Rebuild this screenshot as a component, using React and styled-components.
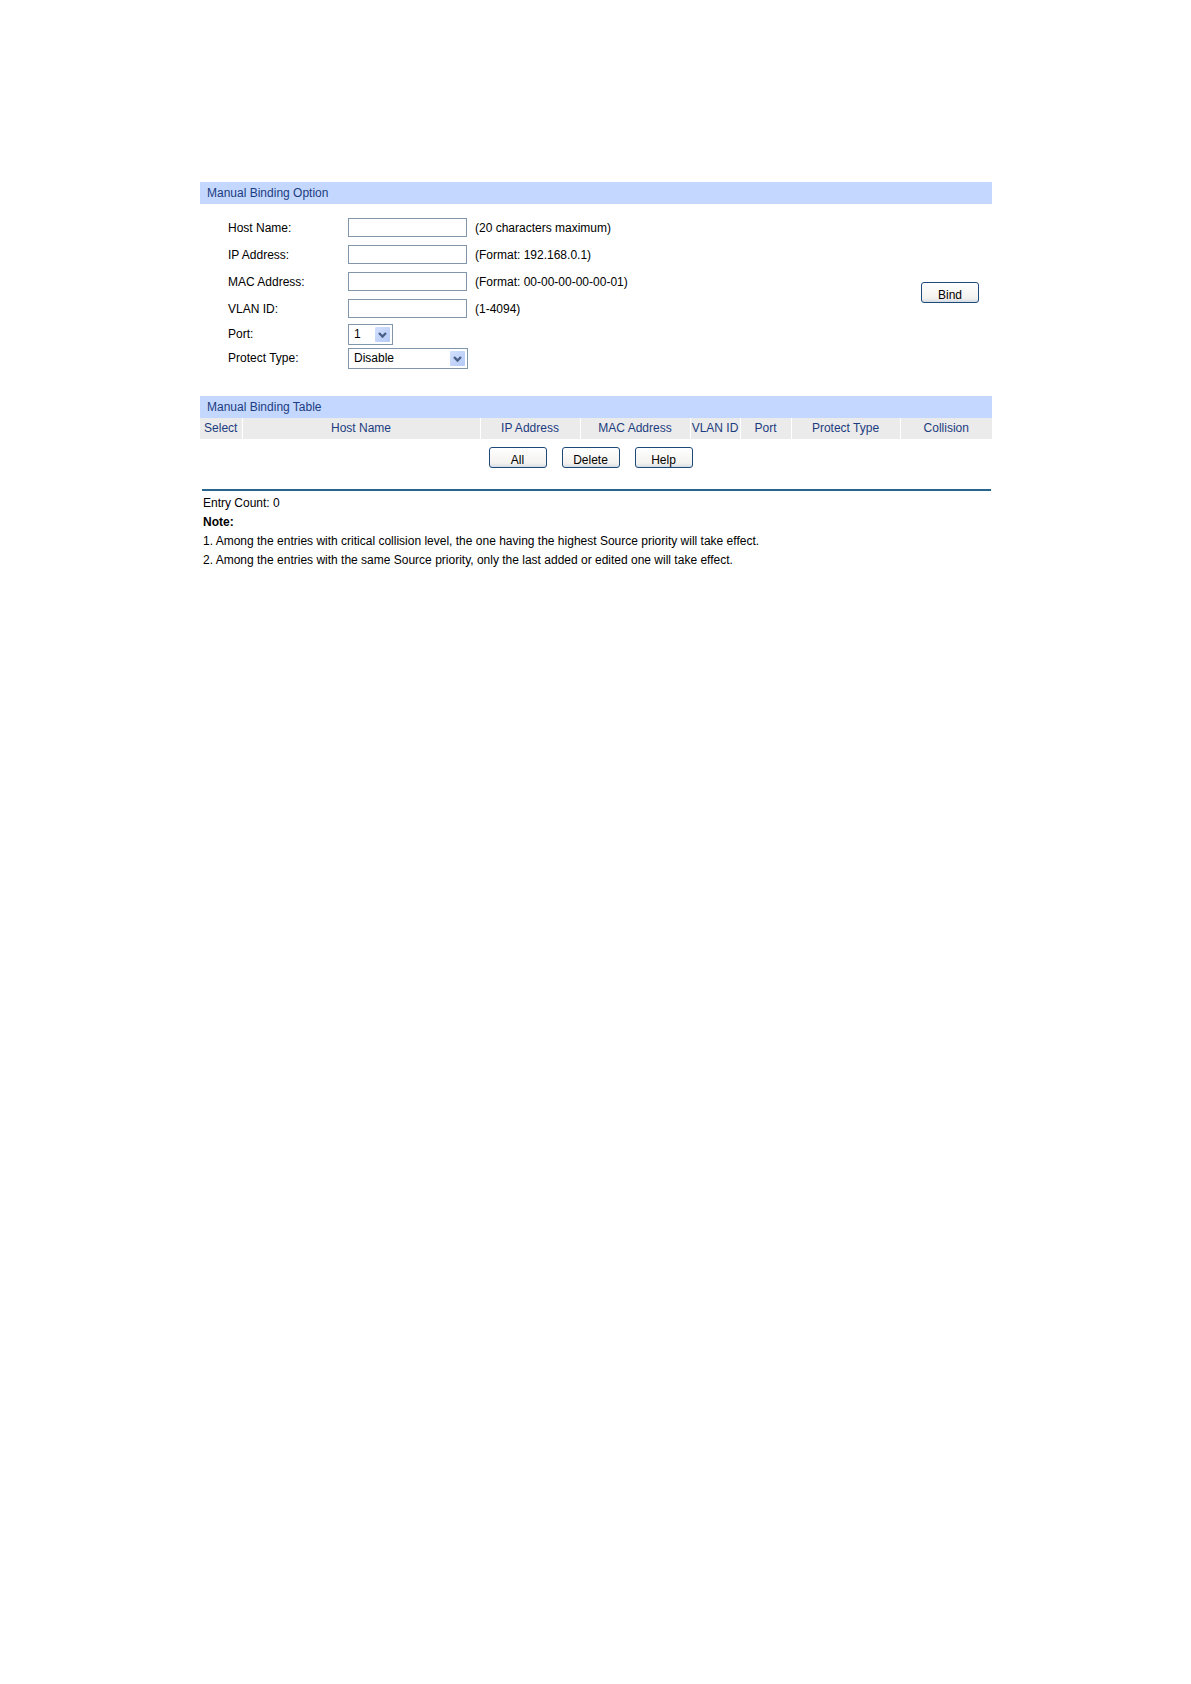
import { useState } from "react";
import styled, { createGlobalStyle } from "styled-components";

const textFields = [
  { id: "hostName", label: "Host Name:", hint: "(20 characters maximum)" },
  { id: "ipAddress", label: "IP Address:", hint: "(Format: 192.168.0.1)" },
  { id: "macAddress", label: "MAC Address:", hint: "(Format: 00-00-00-00-00-01)" },
  { id: "vlanId", label: "VLAN ID:", hint: "(1-4094)" },
];

const columns = [
  { name: "Select", width: 42 },
  { name: "Host Name", width: 238 },
  { name: "IP Address", width: 100 },
  { name: "MAC Address", width: 110 },
  { name: "VLAN ID", width: 50 },
  { name: "Port", width: 51 },
  { name: "Protect Type", width: 109 },
  { name: "Collision", width: 92 },
];

const totalWidth = columns.reduce((sum, col) => sum + col.width, 0);

function Dropdown({ id, wide, options }) {
  return (
    <SelectBox $wide={wide}>
      <select id={id}>
        {options.map((option) => (
          <option key={option}>{option}</option>
        ))}
      </select>
      <svg viewBox="0 0 15 15" aria-hidden="true">
        <defs>
          <linearGradient id={`${id}-arrow`} x1="0" y1="0" x2="1" y2="1">
            <stop offset="0" stopColor="#d3e0fd" />
            <stop offset="1" stopColor="#b4c9f6" />
          </linearGradient>
        </defs>
        <rect width="15" height="15" rx="1" fill={`url(#${id}-arrow)`} />
        <path d="M4 6l3.5 3.5L11 6" fill="none" stroke="#4a6087" strokeWidth="2.4" />
      </svg>
    </SelectBox>
  );
}

export default function App() {
  const [values, setValues] = useState({});

  const handleChange = (e) => {
    setValues({ ...values, [e.target.id]: e.target.value });
  };

  return (
    <Page>
      <GlobalStyle />
      <Title>Manual Binding Option</Title>
      <Form onSubmit={(e) => e.preventDefault()}>
        <Fields>
          {textFields.map(({ id, label, hint }) => (
            <Row key={id}>
              <label htmlFor={id}>{label}</label>
              <Input id={id} type="text" value={values[id] || ""} onChange={handleChange} />
              <span>{hint}</span>
            </Row>
          ))}
          <Row $short>
            <label htmlFor="port">Port:</label>
            <Dropdown id="port" options={["1", "2", "3", "4", "5", "6", "7", "8"]} />
          </Row>
          <Row $short>
            <label htmlFor="protectType">Protect Type:</label>
            <Dropdown id="protectType" wide options={["Disable", "ARP Detection", "All"]} />
          </Row>
        </Fields>
        <Button type="submit">Bind</Button>
      </Form>

      <Title>Manual Binding Table</Title>
      <Table>
        <colgroup>
          {columns.map((col) => (
            <col key={col.name} style={{ width: `${(col.width / totalWidth) * 100}%` }} />
          ))}
        </colgroup>
        <thead>
          <tr>
            {columns.map((col) => (
              <th key={col.name} scope="col">
                {col.name}
              </th>
            ))}
          </tr>
        </thead>
      </Table>
      <Actions>
        <Button type="button">All</Button>
        <Button type="button">Delete</Button>
        <Button type="button">Help</Button>
      </Actions>

      <Notes>
        <p>Entry Count: 0</p>
        <p>
          <strong>Note:</strong>
        </p>
        <p>1. Among the entries with critical collision level, the one having the highest Source priority will take effect.</p>
        <p>2. Among the entries with the same Source priority, only the last added or edited one will take effect.</p>
      </Notes>
    </Page>
  );
}

const GlobalStyle = createGlobalStyle`
  * {
    box-sizing: border-box;
  }
  body {
    margin: 0;
    background: #fff;
    color: #000;
    font-family: "Liberation Sans", Arial, sans-serif;
    font-size: 12px;
  }
  button,
  input,
  select {
    font: inherit;
    color: inherit;
  }
`;

const Page = styled.main`
  padding: 182px 199px 40px 200px;
`;

const Title = styled.h2`
  margin: 0;
  padding: 0 7px;
  background: #c4d8ff;
  color: #1c3c80;
  font-size: 12px;
  font-weight: normal;
  line-height: 22px;
`;

const Form = styled.form`
  display: flex;
  align-items: center;
  justify-content: space-between;
  padding: 10px 13px 26px 28px;
`;

const Fields = styled.div`
  display: flex;
  flex-direction: column;
`;

const Row = styled.div`
  display: flex;
  align-items: center;
  height: ${(props) => (props.$short ? "24px" : "27px")};
  label {
    width: 120px;
  }
  span {
    margin-left: 8px;
  }
`;

const Input = styled.input`
  width: 119px;
  height: 19px;
  padding: 0 4px;
  border: 1px solid #8296ab;
  border-radius: 0;
  background: #fff;
`;

const SelectBox = styled.div`
  display: grid;
  align-items: center;
  width: ${(props) => (props.$wide ? "120px" : "45px")};
  height: 21px;
  select {
    grid-area: 1 / 1;
    width: 100%;
    height: 21px;
    padding: 0 18px 0 5px;
    border: 1px solid #8296ab;
    border-radius: 0;
    background: #fff;
    appearance: none;
  }
  svg {
    grid-area: 1 / 1;
    justify-self: end;
    width: 15px;
    height: 15px;
    margin-right: 3px;
    pointer-events: none;
  }
`;

const Button = styled.button`
  width: 58px;
  height: 21px;
  padding: 5px 0 0;
  border: 1px solid #1d4a78;
  border-radius: 3px;
  background: linear-gradient(#fff, #f3f2ef 80%, #d5dbe4);
  line-height: 14px;
`;

const Table = styled.table`
  width: 100%;
  table-layout: fixed;
  border-collapse: collapse;
  th {
    height: 21px;
    padding: 0 0 2px;
    border-right: 1px solid #fff;
    background: #ebebeb;
    color: #1c3c80;
    font-weight: normal;
    line-height: 18px;
    white-space: nowrap;
  }
  th:last-child {
    border-right: 0;
  }
`;

const Actions = styled.div`
  display: flex;
  justify-content: center;
  gap: 15px;
  padding: 8px 11px 21px 0;
`;

const Notes = styled.section`
  margin: 0 1px 0 2px;
  padding: 3px 1px;
  border-top: 2px solid #27658c;
  line-height: 19px;
  p {
    margin: 0;
  }
`;
